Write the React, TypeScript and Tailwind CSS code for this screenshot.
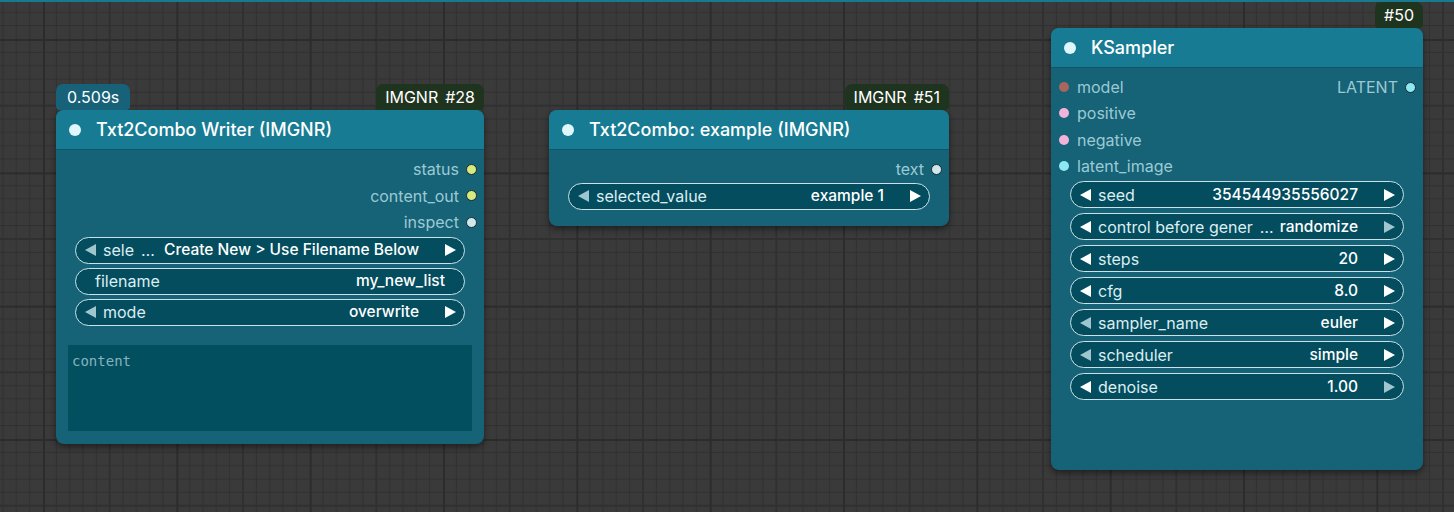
import React from "react";

const FONT = { fontFamily: "Inter, 'Noto Sans', sans-serif" };

function GridBackground() {
  const step = 133.333;
  const cell = step / 10;
  const thin = Array.from({ length: 9 }, (_, i) => (i + 1) * cell);
  return (
    <svg className="absolute inset-0 h-full w-full" aria-hidden>
      <defs>
        <pattern id="grid" x={43} y={39} width={step} height={step} patternUnits="userSpaceOnUse">
          <rect width={step} height={step} fill="#3a3a3a" />
          {thin.map((p, i) => (
            <g key={i} stroke="#303030" strokeWidth={i === 4 ? 2 : 1}>
              <line x1={p} y1={0} x2={p} y2={step} />
              <line x1={0} y1={p} x2={step} y2={p} />
            </g>
          ))}
          <g stroke="#2c2c2c" strokeWidth={4}>
            <line x1={0} y1={0} x2={0} y2={step} />
            <line x1={0} y1={0} x2={step} y2={0} />
          </g>
        </pattern>
      </defs>
      <rect width="100%" height="100%" fill="url(#grid)" />
    </svg>
  );
}

function Arrow({ dir, dim }: { dir: "l" | "r"; dim?: boolean }) {
  return (
    <svg width="13" height="14" viewBox="0 0 13 14" className="shrink-0">
      <polygon
        points={dir === "l" ? "12,1 12,13 1,7" : "1,1 1,13 12,7"}
        fill={dim ? "#9fc6cf" : "#ffffff"}
      />
    </svg>
  );
}

type WidgetProps = {
  label: string;
  value: string;
  left?: "on" | "dim" | "none";
  right?: "on" | "dim" | "none";
  ellipsis?: boolean;
};

function Widget({ label, value, left = "on", right = "on", ellipsis }: WidgetProps) {
  const arrows = left !== "none";
  return (
    <div
      className={`flex h-[27px] items-center rounded-full border border-[#cbe2e8] bg-[#034d5f] leading-none ${
        arrows ? "pl-[8px] pr-[7px]" : "px-[19px]"
      }`}
    >
      {arrows && <Arrow dir="l" dim={left === "dim"} />}
      <span className={`whitespace-nowrap text-[16px] text-[#dceef2] ${arrows ? "ml-[6px]" : ""}`}>{label}</span>
      {ellipsis && <span className="ml-[7px] text-[16px] text-[#dceef2]">…</span>}
      <span className={`ml-auto whitespace-nowrap text-[15.5px] font-medium text-white ${ellipsis ? "pl-[5px]" : ""}`}>
        {value}
      </span>
      {arrows && (
        <span className="ml-[25px]">
          <Arrow dir="r" dim={right === "dim"} />
        </span>
      )}
    </div>
  );
}

function Dot({ color, ring = "#1d2a2e" }: { color: string; ring?: string }) {
  return (
    <span
      className="inline-block h-[11px] w-[11px] shrink-0 rounded-full border-[1.5px]"
      style={{ backgroundColor: color, borderColor: ring }}
    />
  );
}

function OutSlot({ label, color }: { label: string; color: string }) {
  return (
    <div className="flex h-[26.5px] items-center justify-end gap-[7px] pr-[7px]">
      <span className="text-[16px] text-[#9ccad4]">{label}</span>
      <Dot color={color} />
    </div>
  );
}

function InSlot({ label, color }: { label: string; color: string }) {
  return (
    <div className="flex h-[26.3px] items-center gap-[8px] pl-[8px]">
      <span className="h-[10px] w-[10px] shrink-0 rounded-full" style={{ backgroundColor: color }} />
      <span className="text-[16px] text-[#9ccad4]">{label}</span>
    </div>
  );
}

function NodeTitle({ title }: { title: string }) {
  return (
    <div className="flex h-[40px] items-center border-b border-[#0f5567] bg-[#177c93] pl-[13px]">
      <span className="h-[12px] w-[12px] rounded-full bg-[#dff7fb]" />
      <span className="ml-[15px] text-[18px] font-medium text-white">{title}</span>
    </div>
  );
}

function Badge({ children, teal }: { children: React.ReactNode; teal?: boolean }) {
  return (
    <div
      className={`flex h-[26px] items-center gap-[7px] rounded-t-[7px] rounded-b-[4px] text-[16px] text-white ${
        teal ? "bg-[#176278] px-[11px]" : "bg-[#1f341f] px-[9px]"
      }`}
    >
      {children}
    </div>
  );
}

export default function App() {
  return (
    <div className="relative h-[512px] w-[1454px] overflow-hidden bg-[#3a3a3a]" style={FONT}>
      <GridBackground />
      <div className="absolute left-0 right-0 top-0 h-[2px] bg-[#187a90]" />

      {/* Txt2Combo Writer */}
      <div className="absolute left-[56px] top-[84px] w-[428px]">
        <div className="flex items-end justify-between">
          <Badge teal>0.509s</Badge>
          <Badge>
            <span>IMGNR</span>
            <span>#28</span>
          </Badge>
        </div>
        <div className="h-[334px] overflow-hidden rounded-[8px] bg-[#166277] shadow-[0_3px_6px_rgba(0,0,0,0.45)]">
          <NodeTitle title="Txt2Combo Writer (IMGNR)" />
          <div className="pt-[6px]">
            <OutSlot label="status" color="#d7ea7f" />
            <OutSlot label="content_out" color="#d7ea7f" />
            <OutSlot label="inspect" color="#cfe8ec" />
          </div>
          <div className="mt-[1px] flex flex-col gap-[4px] px-[19px]">
            <Widget label="sele" value="Create New > Use Filename Below" left="dim" ellipsis />
            <Widget label="filename" value="my_new_list" left="none" right="none" />
            <Widget label="mode" value="overwrite" left="dim" />
          </div>
          <div className="mx-[12px] mt-[19px] h-[86px] bg-[#024f60] px-[4px] pt-[3px]">
            <span className="text-[14px] text-[#86b3bd]" style={{ fontFamily: "'DejaVu Sans Mono', monospace" }}>
              content
            </span>
          </div>
        </div>
      </div>

      {/* Txt2Combo: example */}
      <div className="absolute left-[549px] top-[84px] w-[400px]">
        <div className="flex justify-end">
          <Badge>
            <span>IMGNR</span>
            <span>#51</span>
          </Badge>
        </div>
        <div className="h-[116px] overflow-hidden rounded-[8px] bg-[#166277] shadow-[0_3px_6px_rgba(0,0,0,0.45)]">
          <NodeTitle title="Txt2Combo: example (IMGNR)" />
          <div className="pt-[6px]">
            <OutSlot label="text" color="#cfe8ec" />
          </div>
          <div className="px-[19px]">
            <Widget label="selected_value" value="example 1" left="dim" />
          </div>
        </div>
      </div>

      {/* KSampler */}
      <div className="absolute left-[1051px] top-[2px] w-[372px]">
        <div className="flex justify-end">
          <Badge>#50</Badge>
        </div>
        <div className="h-[442px] overflow-hidden rounded-[8px] bg-[#166277] shadow-[0_3px_6px_rgba(0,0,0,0.45)]">
          <NodeTitle title="KSampler" />
          <div className="relative pt-[6px]">
            <InSlot label="model" color="#a8675a" />
            <InSlot label="positive" color="#f2b3da" />
            <InSlot label="negative" color="#f2b3da" />
            <InSlot label="latent_image" color="#8ce8f2" />
            <div className="absolute right-0 top-[6px]">
              <OutSlot label="LATENT" color="#8ce8f2" />
            </div>
          </div>
          <div className="mt-[2px] flex flex-col gap-[5px] px-[19px]">
            <Widget label="seed" value="354544935556027" />
            <Widget label="control before gener" value="randomize" right="dim" ellipsis />
            <Widget label="steps" value="20" />
            <Widget label="cfg" value="8.0" />
            <Widget label="sampler_name" value="euler" left="dim" />
            <Widget label="scheduler" value="simple" left="dim" />
            <Widget label="denoise" value="1.00" right="dim" />
          </div>
        </div>
      </div>
    </div>
  );
}
